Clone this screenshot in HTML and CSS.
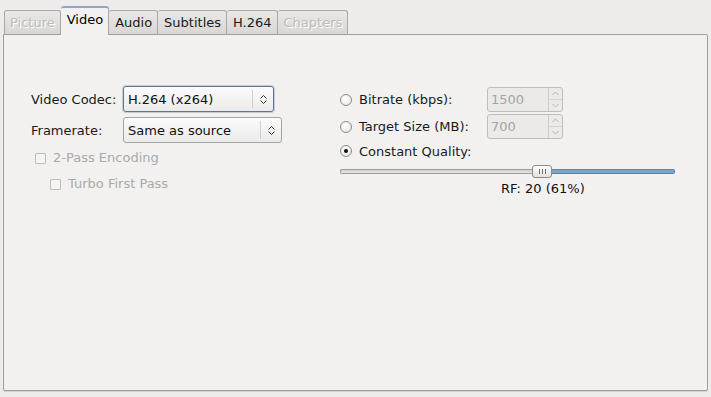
FILE: index.html
```html
<!DOCTYPE html>
<html lang="en">
<head>
  <meta charset="UTF-8">
  <title>Video settings</title>
  <link rel="stylesheet" href="styles.css">
</head>
<body>

<div class="notebook">
  <div class="tabs">
    <div class="tab disabled">Picture</div>
    <div class="tab active">Video</div>
    <div class="tab">Audio</div>
    <div class="tab">Subtitles</div>
    <div class="tab">H.264</div>
    <div class="tab disabled">Chapters</div>
  </div>

  <div class="pane">
    <div class="col-left">
      <div class="field">
        <span class="field-label">Video Codec:</span>
        <div class="combo focused codec">
          <span class="combo-text">H.264 (x264)</span>
          <span class="combo-btn">
            <svg width="7" height="11" viewBox="0 0 7 11"><path d="M0.5 4.5 L3.5 1.5 L6.5 4.5 M0.5 6.5 L3.5 9.5 L6.5 6.5" fill="none" stroke="#333" stroke-width="1"/></svg>
          </span>
        </div>
      </div>
      <div class="field framerate-row">
        <span class="field-label">Framerate:</span>
        <div class="combo framerate">
          <span class="combo-text">Same as source</span>
          <span class="combo-btn">
            <svg width="7" height="11" viewBox="0 0 7 11"><path d="M0.5 4.5 L3.5 1.5 L6.5 4.5 M0.5 6.5 L3.5 9.5 L6.5 6.5" fill="none" stroke="#333" stroke-width="1"/></svg>
          </span>
        </div>
      </div>
      <div class="check disabled first-check"><span class="box"></span>2-Pass Encoding</div>
      <div class="check disabled sub-check"><span class="box"></span>Turbo First Pass</div>
    </div>

    <div class="col-right">
      <div class="rate-row">
        <span class="radio"></span>
        <span class="rate-label">Bitrate (kbps):</span>
        <div class="spin">
          <span class="spin-text">1500</span>
          <span class="spin-btns">
            <span class="spin-up"><svg width="7" height="5" viewBox="0 0 7 5"><path d="M0.5 4 L3.5 1 L6.5 4" fill="none" stroke="#b4b4b4"/></svg></span>
            <span class="spin-down"><svg width="7" height="5" viewBox="0 0 7 5"><path d="M0.5 1 L3.5 4 L6.5 1" fill="none" stroke="#b4b4b4"/></svg></span>
          </span>
        </div>
      </div>
      <div class="rate-row second">
        <span class="radio"></span>
        <span class="rate-label">Target Size (MB):</span>
        <div class="spin">
          <span class="spin-text">700</span>
          <span class="spin-btns">
            <span class="spin-up"><svg width="7" height="5" viewBox="0 0 7 5"><path d="M0.5 4 L3.5 1 L6.5 4" fill="none" stroke="#b4b4b4"/></svg></span>
            <span class="spin-down"><svg width="7" height="5" viewBox="0 0 7 5"><path d="M0.5 1 L3.5 4 L6.5 1" fill="none" stroke="#b4b4b4"/></svg></span>
          </span>
        </div>
      </div>
      <div class="rate-row quality">
        <span class="radio checked"></span>
        <span class="rate-label">Constant Quality:</span>
      </div>
      <div class="slider">
        <div class="track-low" style="width: 192px;"></div>
        <div class="handle"><span></span><span></span><span></span></div>
        <div class="track-high"></div>
      </div>
      <div class="rf">RF: 20 (61%)</div>
    </div>
  </div>
</div>

</body>
</html>
```

FILE: styles.css
```css
body {
  margin: 0;
  background: #edeceb;
  font-family: "DejaVu Sans", sans-serif;
  font-size: 13px;
  color: #1a1a1a;
}
.notebook { padding: 6px 3px 6px 3px; }

.tabs {
  display: flex;
  align-items: flex-end;
  margin-left: 1px;
}
.tab {
  height: 24px;
  box-sizing: border-box;
  padding: 4px 5px 3px 5px;
  line-height: 16px;
  border: 1px solid #a8a8a8;
  border-bottom: none;
  border-radius: 3px 3px 0 0;
  background: linear-gradient(#e9e8e6, #d8d7d5);
  white-space: nowrap;
}
.tab + .tab { border-left: none; padding-left: 6px; }
.tab.disabled {
  color: #bcbcbc;
  text-shadow: 1px 1px 0 #ffffff;
}
.tab.active {
  position: relative;
  z-index: 1;
  height: 29px;
  margin-bottom: -1px;
  padding-top: 4px;
  border-top: 2px solid #8ba7cc;
  background: #f2f1f0;
  color: #000;
}

.pane {
  display: flex;
  height: 357px;
  box-sizing: border-box;
  border: 1px solid #9e9e9e;
  border-radius: 0 2px 2px 2px;
  box-shadow: 0 1px 0 #d2d2d2;
  background: #f2f1f0;
  padding: 51px 0 0 27px;
}

.col-left { width: 309px; }
.field {
  display: flex;
  align-items: center;
}
.field-label { width: 92px; }
.framerate-row { margin-top: 5px; }

.combo {
  display: flex;
  align-items: center;
  height: 26px;
  box-sizing: border-box;
  border: 1px solid #a4a4a4;
  border-radius: 3px;
  background: linear-gradient(#fbfbfb, #ebebea);
}
.combo.focused {
  border-color: #65758a;
  box-shadow: 0 0 0 1px #c5ccd6;
}
.combo.codec { width: 151px; }
.combo.framerate { width: 159px; }
.combo-text {
  flex: 1;
  padding-left: 4px;
  color: #111;
}
.combo-btn {
  width: 20px;
  height: 18px;
  display: flex;
  align-items: center;
  justify-content: center;
  border-left: 1px solid #cfcfcf;
}

.check {
  display: flex;
  align-items: center;
  line-height: 16px;
}
.check.disabled { color: #a9a9a9; }
.check .box {
  width: 11px;
  height: 11px;
  box-sizing: border-box;
  border: 1px solid #bcbcbc;
  border-radius: 1px;
  background: #f4f4f3;
  margin-right: 7px;
}
.first-check { margin-top: 7px; padding-left: 4px; }
.sub-check { margin-top: 10px; padding-left: 19px; }

.col-right {
  width: 335px;
  margin-top: 1px;
}
.rate-row {
  display: flex;
  align-items: center;
  height: 25px;
}
.rate-row.second { margin-top: 2px; }
.rate-row.quality { height: 16px; margin-top: 4px; }
.radio {
  width: 12px;
  height: 12px;
  box-sizing: border-box;
  border: 1px solid #8a8a8a;
  border-radius: 50%;
  background: radial-gradient(circle at 40% 35%, #ffffff, #e4e4e4);
  margin-right: 7px;
  display: flex;
  align-items: center;
  justify-content: center;
}
.radio.checked::after {
  content: "";
  width: 4px;
  height: 4px;
  border-radius: 50%;
  background: #111;
}
.rate-label { width: 128px; }

.spin {
  display: flex;
  width: 76px;
  height: 25px;
  box-sizing: border-box;
  border: 1px solid #bdbdbd;
  border-radius: 3px;
  background: #ebeae8;
}
.spin-text {
  flex: 1;
  padding-left: 3px;
  line-height: 23px;
  color: #a4a4a4;
}
.spin-btns {
  width: 13px;
  display: flex;
  flex-direction: column;
  border-left: 1px solid #cdcdcd;
}
.spin-up, .spin-down {
  flex: 1;
  display: flex;
  align-items: center;
  justify-content: center;
}
.spin-up { border-bottom: 1px solid #d4d4d4; }

.slider {
  display: flex;
  align-items: center;
  height: 13px;
  margin-top: 6px;
}
.track-low {
  height: 5px;
  box-sizing: border-box;
  border: 1px solid #9c9c9c;
  border-right: none;
  border-radius: 2px 0 0 2px;
  background: linear-gradient(#d2d1cf, #e6e5e3);
}
.track-high {
  flex: 1;
  height: 5px;
  box-sizing: border-box;
  border: 1px solid #5c80b1;
  border-left: none;
  border-radius: 0 2px 2px 0;
  background: #7ea3d2;
}
.handle {
  width: 20px;
  height: 13px;
  box-sizing: border-box;
  border: 1px solid #8b8b8b;
  border-radius: 3px;
  background: linear-gradient(#fdfdfd, #e2e1df);
  display: flex;
  align-items: center;
  justify-content: center;
  gap: 2px;
}
.handle span {
  width: 1px;
  height: 5px;
  background: #6f6f6f;
}

.rf {
  margin-top: 3px;
  margin-left: 161px;
  line-height: 16px;
  color: #111;
}
```
